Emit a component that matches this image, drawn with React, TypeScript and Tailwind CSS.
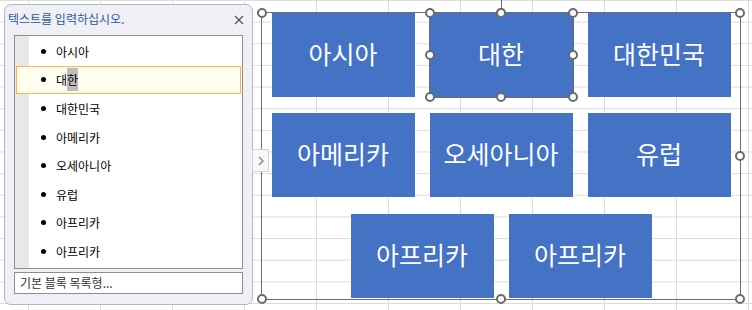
import React from "react";

const ITEMS = ["아시아", "대한", "대한민국", "아메리카", "오세아니아", "유럽", "아프리카", "아프리카"];

const ROWS = [
  ["아시아", "대한", "대한민국"],
  ["아메리카", "오세아니아", "유럽"],
  ["아프리카", "아프리카"],
];

const kr = { fontFamily: '"Noto Sans CJK KR", "Noto Sans", sans-serif' };

// 선택 핸들 (흰 원)
function Handle({ pos }: { pos: string }) {
  return (
    <div
      className={`absolute z-20 w-[10px] h-[10px] -translate-x-1/2 -translate-y-1/2 rounded-full border-2 border-[#6b6b6b] bg-white ${pos}`}
    />
  );
}

const EIGHT = [
  "left-0 top-0",
  "left-1/2 top-0",
  "left-full top-0",
  "left-0 top-1/2",
  "left-full top-1/2",
  "left-0 top-full",
  "left-1/2 top-full",
  "left-full top-full",
];

function TextPane() {
  return (
    <div
      className="ml-[4px] mt-[4px] w-[249px] h-[301px] shrink-0 rounded-[7px] border border-[#a9bcc6] bg-[#efeff5] flex flex-col"
      style={kr}
    >
      <div className="h-[28px] flex items-center justify-between pl-[3px] pr-[8px]">
        <span className="text-[12px] text-[#2a5a9a] leading-none">텍스트를 입력하십시오.</span>
        <svg width="10" height="10" viewBox="0 0 10 10" className="mt-[2px]">
          <path d="M1 1 L9 9 M9 1 L1 9" stroke="#555" strokeWidth="1.2" fill="none" />
        </svg>
      </div>
      <div className="mx-[9px] mt-[2px] h-[234px] border border-[#8e8e8e] bg-[linear-gradient(to_right,#e8e8e8_14px,#ffffff_14px)] pt-[1px]">
        {ITEMS.map((t, i) => {
          const sel = i === 1;
          return (
            <div
              key={i}
              className={`mx-[1px] h-[28.6px] flex items-center border pl-[24px] ${
                sel ? "border-[#fbb64a] bg-[#fffcf0]" : "border-transparent"
              }`}
            >
              <span className="w-[5px] h-[5px] rounded-full bg-black shrink-0" />
              <span className="ml-[10px] text-[12px] text-black leading-[23px]">
                {sel ? (
                  <>
                    대<span className="inline-block h-[23px] bg-[#bdbdbd]">한</span>
                  </>
                ) : (
                  t
                )}
              </span>
            </div>
          );
        })}
      </div>
      <div className="mx-[9px] mt-[3px] h-[22px] border border-[#8e8e8e] bg-white flex items-center pl-[5px]">
        <span className="text-[12px] text-[#333] leading-none">기본 블록 목록형...</span>
      </div>
    </div>
  );
}

function Shape({ label, selected }: { label: string; selected?: boolean }) {
  return (
    <div
      className={`relative w-[143px] h-[84px] bg-[#4472c4] flex items-center justify-center ${
        selected ? "outline outline-1 outline-[#6b6b6b]" : ""
      }`}
    >
      <span className="text-white text-[25px] leading-none -mt-[3px]" style={kr}>
        {label}
      </span>
      {selected && (
        <>
          <div className="absolute left-1/2 -top-[14px] h-[14px] w-px bg-[#6b6b6b]" />
          {EIGHT.map((p) => (
            <Handle key={p} pos={p} />
          ))}
        </>
      )}
    </div>
  );
}

function SmartArtFrame() {
  return (
    <div className="relative ml-[8px] mt-[12px] w-[480px] h-[288px] shrink-0 border border-[#6d6d6d]">
      {EIGHT.map((p) => (
        <Handle key={p} pos={p} />
      ))}
      {/* 텍스트 창 펼치기 버튼 */}
      <div className="absolute z-30 -left-[10px] top-[136px] w-[17px] h-[23px] bg-[#f8f8f8] border border-[#d3d3d3] flex items-center justify-center">
        <svg width="6" height="10" viewBox="0 0 6 10">
          <path d="M1 1 L5 5 L1 9" stroke="#8a8a8a" strokeWidth="1.5" fill="none" />
        </svg>
      </div>
      <div className="flex flex-col gap-[16px]">
        {ROWS.map((row, ri) => (
          <div key={ri} className={`flex justify-center gap-[15px] ${ri === 2 ? "mt-[1px]" : ""}`}>
            {row.map((l, ci) => (
              <Shape key={ci} label={l} selected={ri === 0 && ci === 1} />
            ))}
          </div>
        ))}
      </div>
    </div>
  );
}

export default function App() {
  return (
    <div className="w-[752px] h-[310px] overflow-hidden bg-white bg-[linear-gradient(to_right,#dcdcdc_1px,transparent_1px),linear-gradient(to_bottom,#dcdcdc_1px,transparent_1px)] bg-[size:72px_21.65px] bg-[position:28px_0px]">
      <div className="flex items-start">
        <TextPane />
        <SmartArtFrame />
      </div>
    </div>
  );
}
